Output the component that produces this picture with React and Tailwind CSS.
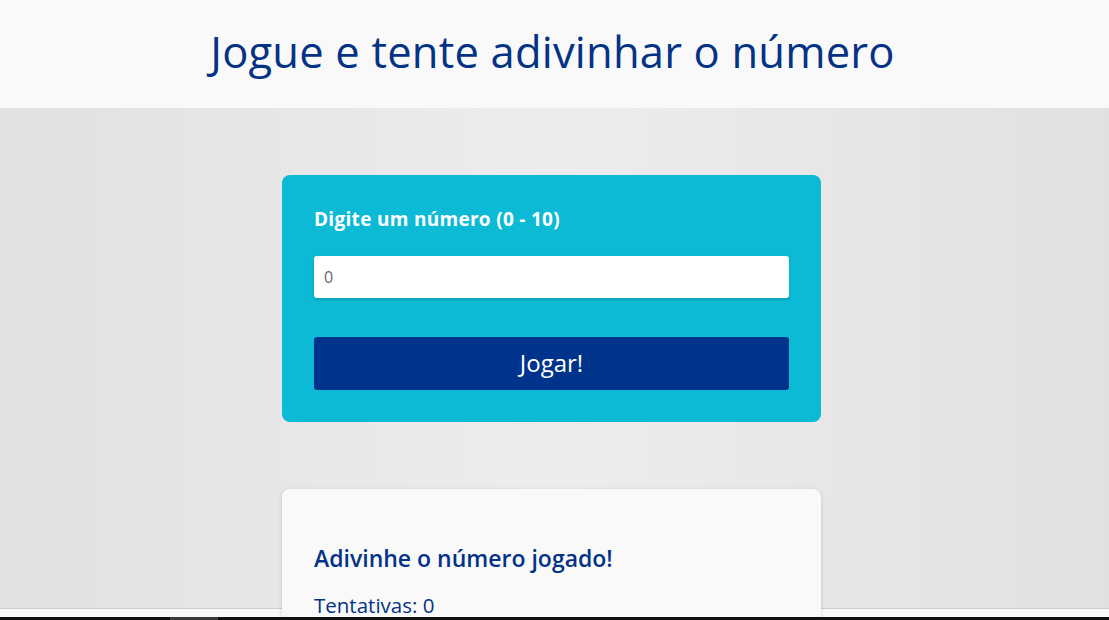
import React, { useState } from "react";

function App() {
  const [guess, setGuess] = useState("");
  const [tries, setTries] = useState(0);

  const handleSubmit = (e) => {
    e.preventDefault();
    setTries(tries + 1);
  };

  return (
    <div className="min-h-screen bg-[#fafafa] font-['Open_Sans',sans-serif]">
      <header className="h-[108px] bg-[#f9f9f9] flex items-center justify-center pr-1">
        <h1 className="text-[43.5px] text-[#043386] tracking-[0.2px] -mt-1">Jogue e tente adivinhar o número</h1>
      </header>

      <main className="h-[501px] border-b border-[#cdcdcd] bg-linear-to-r from-[#e1e1e1] via-[#ededed] to-[#e1e1e1] flex flex-col items-center pt-[67px] pr-[6px]">
        <form
          onSubmit={handleSubmit}
          className="w-[539px] bg-[#0cbad6] rounded-lg px-8 pt-[30px] pb-8 flex flex-col"
        >
          <label className="text-white font-bold text-[19px] tracking-[0.3px]">Digite um número (0 - 10)</label>
          <input
            type="number"
            value={guess}
            onChange={(e) => setGuess(e.target.value)}
            placeholder="0"
            className="mt-[22px] h-[42px] bg-white rounded-[3px] px-[10px] text-[16px] text-[#555] placeholder:text-[#666] shadow-[0_2px_3px_rgba(0,0,0,0.15)] outline-none"
          />
          <button className="mt-[39px] h-[53px] bg-[#00338c] rounded-[3px] text-white text-[24px]">Jogar!</button>
        </form>

        <section className="mt-[67px] w-[539px] shrink-0 bg-[#f9f9f9] rounded-lg shadow-[0_1px_4px_rgba(0,0,0,0.15)] px-8 pt-[52px] pb-8">
          <h2 className="text-[23px] font-semibold text-[#043386]">Adivinhe o número jogado!</h2>
          <p className="mt-[16px] text-[20.5px] leading-[28px] text-[#043386]">Tentativas: {tries}</p>
        </section>
      </main>

      <div className="fixed bottom-0 left-0 right-0 h-[3px] bg-[#111] flex">
        <div className="ml-[170px] w-[48px] bg-[#3a3a3a]" />
      </div>
    </div>
  );
}

export default App;
